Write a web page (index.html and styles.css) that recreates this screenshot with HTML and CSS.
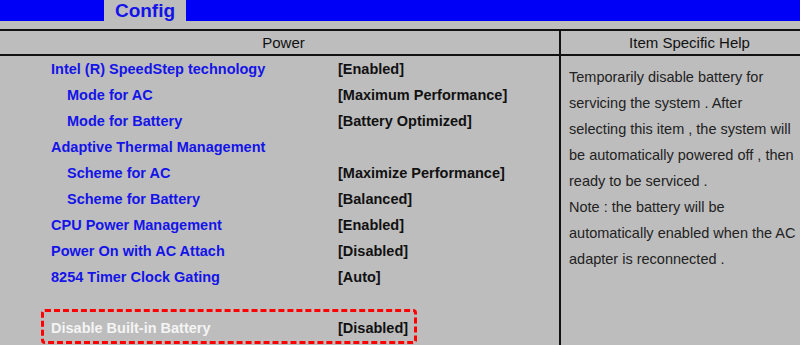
FILE: index.html
```html
<!DOCTYPE html>
<html>
<head>
  <title>Config - Power</title>
  <link rel="stylesheet" href="styles.css">
</head>
<body>
  <div class="topbar">
    <div class="tab">Config</div>
  </div>

  <div class="panel">
    <div class="head">
      <div class="head-left">Power</div>
      <div class="head-right">Item Specific Help</div>
    </div>

    <div class="body">
      <div class="items">
        <div class="row"><span class="label">Intel (R) SpeedStep technology</span><span class="value">[Enabled]</span></div>
        <div class="row sub"><span class="label">Mode for AC</span><span class="value">[Maximum Performance]</span></div>
        <div class="row sub"><span class="label">Mode for Battery</span><span class="value">[Battery Optimized]</span></div>
        <div class="row"><span class="label">Adaptive Thermal Management</span><span class="value"></span></div>
        <div class="row sub"><span class="label">Scheme for AC</span><span class="value">[Maximize Performance]</span></div>
        <div class="row sub"><span class="label">Scheme for Battery</span><span class="value">[Balanced]</span></div>
        <div class="row"><span class="label">CPU Power Management</span><span class="value">[Enabled]</span></div>
        <div class="row"><span class="label">Power On with AC Attach</span><span class="value">[Disabled]</span></div>
        <div class="row"><span class="label">8254 Timer Clock Gating</span><span class="value">[Auto]</span></div>

        <div class="selected">
          <div class="row"><span class="label">Disable Built-in Battery</span><span class="value">[Disabled]</span></div>
        </div>
      </div>

      <div class="help">
        <p>Temporarily disable battery for servicing the system . After selecting this item , the system will be automatically powered off , then ready to be serviced .</p>
        <p>Note : the battery will be automatically enabled when the AC adapter is reconnected .</p>
      </div>
    </div>
  </div>
</body>
</html>
```

FILE: styles.css
```css
body {
  background-color: #bdbdbd;
  font-family: "Liberation Sans", Arial, sans-serif;
  margin: 0;
  padding: 0;
  overflow: hidden;
}

.topbar {
  height: 21px;
  background-color: #0000f6;
  display: flex;
}

.tab {
  margin-left: 104px;
  width: 82px;
  background-color: #bdbdbd;
  color: #1414e8;
  font-weight: bold;
  font-size: 19px;
  line-height: 21px;
  text-align: center;
}

.panel {
  margin-top: 8px;
  border-top: 2px solid #111;
}

.head {
  display: flex;
  height: 23px;
  border-bottom: 2px solid #111;
  font-size: 15px;
  color: #111;
  line-height: 24px;
}

.head-left {
  width: 561px;
  padding-left: 8px;
  box-sizing: border-box;
  text-align: center;
  border-right: 2px solid #111;
}

.head-right {
  flex: 1;
  padding-left: 18px;
  text-align: center;
}

.body {
  display: flex;
  height: 300px;
}

.items {
  width: 561px;
  box-sizing: border-box;
  border-right: 2px solid #111;
}

.row {
  display: flex;
  height: 26px;
  line-height: 26px;
  font-size: 14.5px;
  font-weight: bold;
  padding-left: 51px;
}

.label {
  width: 287px;
  color: #1414e8;
}

.row.sub .label {
  padding-left: 16px;
  width: 271px;
}

.value {
  color: #111;
}

.selected {
  margin-top: 19px;
  margin-left: 41px;
  width: 370px;
  padding-top: 3px;
  border: 3px dashed #f00;
  border-radius: 4px;
}

.selected .row {
  padding-left: 7px;
}

.selected .label {
  color: #f4f4f4;
}

.help {
  flex: 1;
  padding: 8px 0 0 8px;
  font-size: 14.5px;
  line-height: 26px;
  color: #222;
}

.help p {
  margin: 0;
}
```
